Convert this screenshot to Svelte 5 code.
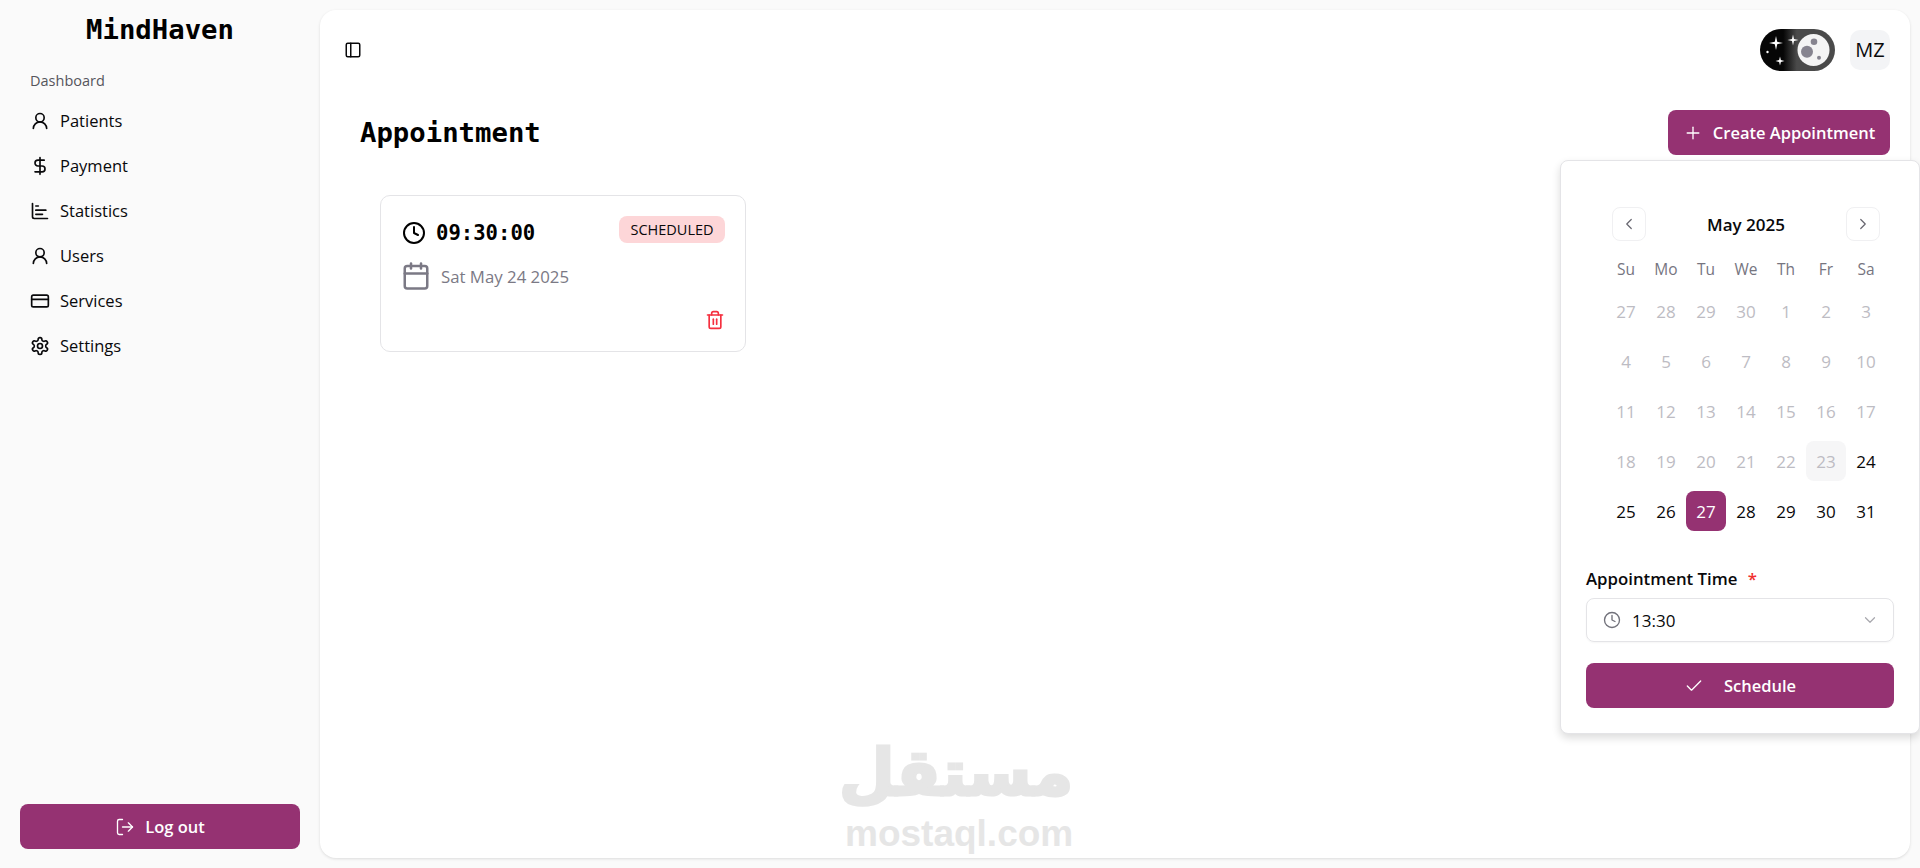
<script>
  const P = {
    user: '<circle cx="12" cy="8" r="5"/><path d="M20 21a8 8 0 0 0-16 0"/>',
    dollar: '<line x1="12" x2="12" y1="2" y2="22"/><path d="M17 5H9.5a3.5 3.5 0 0 0 0 7h5a3.5 3.5 0 0 1 0 7H6"/>',
    chart: '<path d="M3 3v16a2 2 0 0 0 2 2h16"/><path d="M7 16h8"/><path d="M7 11h12"/><path d="M7 6h3"/>',
    card: '<rect width="20" height="14" x="2" y="5" rx="2"/><line x1="2" x2="22" y1="10" y2="10"/>',
    gear: '<path d="M12.22 2h-.44a2 2 0 0 0-2 2v.18a2 2 0 0 1-1 1.73l-.43.25a2 2 0 0 1-2 0l-.15-.08a2 2 0 0 0-2.73.73l-.22.38a2 2 0 0 0 .73 2.73l.15.1a2 2 0 0 1 1 1.72v.51a2 2 0 0 1-1 1.74l-.15.09a2 2 0 0 0-.73 2.73l.22.38a2 2 0 0 0 2.73.73l.15-.08a2 2 0 0 1 2 0l.43.25a2 2 0 0 1 1 1.73V20a2 2 0 0 0 2 2h.44a2 2 0 0 0 2-2v-.18a2 2 0 0 1 1-1.73l.43-.25a2 2 0 0 1 2 0l.15.08a2 2 0 0 0 2.73-.73l.22-.39a2 2 0 0 0-.73-2.73l-.15-.08a2 2 0 0 1-1-1.74v-.5a2 2 0 0 1 1-1.74l.15-.09a2 2 0 0 0 .73-2.73l-.22-.38a2 2 0 0 0-2.73-.73l-.15.08a2 2 0 0 1-2 0l-.43-.25a2 2 0 0 1-1-1.73V4a2 2 0 0 0-2-2z"/><circle cx="12" cy="12" r="3"/>',
    logout: '<path d="M9 21H5a2 2 0 0 1-2-2V5a2 2 0 0 1 2-2h4"/><polyline points="16 17 21 12 16 7"/><line x1="21" x2="9" y1="12" y2="12"/>',
    panel: '<rect width="18" height="18" x="3" y="3" rx="2"/><path d="M9 3v18"/>',
    clock: '<circle cx="12" cy="12" r="10"/><polyline points="12 6 12 12 16 14"/>',
    cal: '<path d="M8 2v4"/><path d="M16 2v4"/><rect width="18" height="18" x="3" y="4" rx="2"/><path d="M3 10h18"/>',
    trash: '<path d="M3 6h18"/><path d="M19 6v14c0 1-1 2-2 2H7c-1 0-2-1-2-2V6"/><path d="M8 6V4c0-1 1-2 2-2h4c1 0 2 1 2 2v2"/><line x1="10" x2="10" y1="11" y2="17"/><line x1="14" x2="14" y1="11" y2="17"/>',
    left: '<path d="m15 18-6-6 6-6"/>',
    right: '<path d="m9 18 6-6-6-6"/>',
    down: '<path d="m6 9 6 6 6-6"/>',
    plus: '<path d="M5 12h14"/><path d="M12 5v14"/>',
    check: '<path d="M20 6 9 17l-5-5"/>'
  };
  const nav = [['user','Patients'],['dollar','Payment'],['chart','Statistics'],['user','Users'],['card','Services'],['gear','Settings']];
  const wk = ['Su','Mo','Tu','We','Th','Fr','Sa'];
  const days = [27,28,29,30,1,2,3,4,5,6,7,8,9,10,11,12,13,14,15,16,17,18,19,20,21,22,23,24,25,26,27,28,29,30,31];
</script>

{#snippet icon(name, size, sw = 2)}
  <svg class="ic" width={size} height={size} viewBox="0 0 24 24" fill="none" stroke="currentColor" stroke-width={sw} stroke-linecap="round" stroke-linejoin="round">{@html P[name]}</svg>
{/snippet}

<div class="app">
  <aside>
    <div class="brand">MindHaven</div>
    <div class="group">Dashboard</div>
    <nav>
      {#each nav as [i, label]}
        <div class="item">{@render icon(i, 20)}<span>{label}</span></div>
      {/each}
    </nav>
    <button class="btn logout">{@render icon('logout', 20, 1.6)}<span>Log out</span></button>
  </aside>

  <main>
    <header>
      <span class="trigger">{@render icon('panel', 18)}</span>
      <div class="right">
        <svg class="toggle" width="75" height="42" viewBox="0 0 75 42">
          <defs>
            <linearGradient id="tg" x1="0" x2="1" y1="0" y2="0">
              <stop offset="0.31" stop-color="#060606"/>
              <stop offset="0.49" stop-color="#4a4a4a"/>
            </linearGradient>
          </defs>
          <rect width="75" height="42" rx="21" fill="url(#tg)"/>
          <circle cx="53.500" cy="21" r="16" fill="#f4f4f4"/>
          <circle cx="47" cy="22.700" r="6" fill="#86848f"/>
          <circle cx="54" cy="12.700" r="3.300" fill="#86848f"/>
          <circle cx="59" cy="28.700" r="2" fill="#86848f"/>
          <g fill="#fff">
            <path d="M16 7l1.200 5.800L23 14l-5.800 1.200L16 21l-1.200-5.800L9 14l5.800-1.200z"/>
            <path d="M33 5.500l1 4.500 4.500 1-4.500 1-1 4.500-1-4.500-4.500-1 4.500-1z"/>
            <path d="M20 27.500l.9 3.600 3.600.9-3.600.9-.9 3.600-.9-3.600-3.600-.9 3.600-.9z"/>
            <circle cx="7.500" cy="23" r="1.200"/>
          </g>
        </svg>
        <div class="avatar">MZ</div>
      </div>
    </header>

    <div class="titlebar">
      <h1>Appointment</h1>
      <button class="btn create">{@render icon('plus', 20, 1.6)}<span>Create Appointment</span></button>
    </div>

    <section class="card">
      <div class="row1">
        <div class="time">{@render icon('clock', 24)}<span>09:30:00</span></div>
        <span class="badge">SCHEDULED</span>
      </div>
      <div class="date">{@render icon('cal', 30, 2)}<span>Sat May 24 2025</span></div>
      <div class="del">{@render icon('trash', 20)}</div>
    </section>

    <div class="wm">
      <div class="wm-ar" dir="rtl" lang="ar">مستقل</div>
      <div class="wm-en">mostaql.com</div>
    </div>

    <div class="pop">
      <div class="cal">
        <div class="calhead">
          <span class="navb">{@render icon('left', 18, 1.6)}</span>
          <strong>May 2025</strong>
          <span class="navb">{@render icon('right', 18, 1.6)}</span>
        </div>
        <div class="grid">
          {#each wk as w}<div class="wk">{w}</div>{/each}
          {#each days as d, i}
            <div class="day" class:off={i < 27} class:today={i === 26} class:sel={i === 30}>{d}</div>
          {/each}
        </div>
      </div>
      <div class="lab">Appointment Time <i>*</i></div>
      <div class="select">
        <span class="cl">{@render icon('clock', 18, 1.8)}</span>
        <span class="val">13:30</span>
        <span class="ch">{@render icon('down', 18, 1.6)}</span>
      </div>
      <button class="btn sched">{@render icon('check', 20, 1.6)}<span>Schedule</span></button>
    </div>
  </main>
</div>

<style>
  :global(body) { margin: 0; background: #fafafa; }
  * { box-sizing: border-box; }
  .app { display: flex; height: 868px; width: 1920px; overflow: hidden; background: #fafafa; color: #09090b; font-family: "Open Sans", "Noto Sans", sans-serif; font-size: 16px; }
  .ic { display: block; flex: none; }
  aside { width: 320px; flex: none; display: flex; flex-direction: column; padding: 0 20px 19px; }
  .brand { font: 700 27.300px/60px "DejaVu Sans Mono", monospace; text-align: center; color: #000; }
  .group { margin: 10px 0 0 10px; font-size: 14.500px; line-height: 22px; font-weight: 500; color: #55555c; }
  nav { display: flex; flex-direction: column; margin-top: 6px; flex: 1; }
  .item { height: 45px; display: flex; align-items: center; gap: 10px; padding-left: 10px; font-size: 16.500px; }
  .btn { display: flex; align-items: center; justify-content: center; border: 0; background: #953272; color: #fff; border-radius: 8px; height: 45px; font: 600 16.500px "Open Sans", sans-serif; }
  .logout { gap: 10px; width: 280px; }
  main { position: relative; flex: 1; margin: 10px 10px 10px 0; background: #fff; border-radius: 16px; box-shadow: 0 1px 3px rgba(0,0,0,.12); padding: 0 20px 0 40px; }
  header { height: 80px; display: flex; align-items: center; justify-content: space-between; padding-bottom: 1px; }
  .trigger { margin-left: -16px; }
  .right { display: flex; align-items: center; gap: 15px; }
  .toggle { display: block; }
  .avatar { width: 40px; height: 40px; border-radius: 10px; background: #f3f4f6; display: flex; align-items: center; justify-content: center; font-size: 20px; }
  .titlebar { display: flex; justify-content: space-between; align-items: center; margin-top: 20px; height: 45px; }
  h1 { margin: 0; font: 700 27.300px "DejaVu Sans Mono", monospace; color: #000; }
  .create { width: 222px; gap: 10px; }
  .card { width: 366px; height: 157px; margin: 40px 0 0 20px; border: 1.500px solid #e4e4e7; border-radius: 10px; padding: 20px 20px 0 21px; position: relative; }
  .row1 { display: flex; justify-content: space-between; align-items: flex-start; }
  .time { display: flex; align-items: center; gap: 10px; font: 700 20.600px "DejaVu Sans Mono", monospace; margin-top: 5px; color: #000; }
  .badge { height: 27px; width: 106px; border-radius: 8px; background: #fdd6d8; display: flex; align-items: center; justify-content: center; font-size: 14.500px; font-weight: 500; }
  .date { display: flex; align-items: center; gap: 10px; margin-top: 16px; margin-left: -1px; color: #7b7985; font-size: 16.800px; }
  .del { color: #f5303f; display: flex; justify-content: flex-end; margin-top: 19px; }
  .wm { position: absolute; left: 0; top: 0; margin: 731px 0 0 527px; width: 226px; color: #e6e6e6; text-align: center; }
  .wm-ar { font: 700 64px/64px "DejaVu Sans", sans-serif; height: 73px; padding-left: 6px; -webkit-text-stroke: 3px #e6e6e6; }
  .wm-en { font: 700 37px/40px "Liberation Sans", sans-serif; margin-left: -2px; }
  .pop { position: absolute; top: 150px; right: -10px; width: 360px; height: 574px; background: #fff; border: 1.500px solid #e4e4e7; border-radius: 8px; box-shadow: 0 4px 8px rgba(0,0,0,.14); padding: 46px 25px 0; }
  .cal { padding-left: 20px; width: 300px; }
  .calhead { display: flex; align-items: center; justify-content: space-between; padding: 0 6px; height: 34px; }
  .calhead strong { font-size: 17px; font-weight: 600; }
  .navb { width: 34px; height: 34px; border: 1px solid #f0f0f2; border-radius: 8px; display: flex; align-items: center; justify-content: center; color: #66656f; }
  .grid { display: grid; grid-template-columns: repeat(7, 40px); row-gap: 10px; }
  .wk { height: 40px; margin: 8px 0 -8px; display: flex; align-items: center; justify-content: center; font-size: 15.500px; color: #76757f; }
  .day { height: 40px; display: flex; align-items: center; justify-content: center; font-size: 17px; border-radius: 8px; }
  .off { color: #bdbcc3; }
  .today { background: #f6f6f7; }
  .sel { background: #953272; color: #fff; }
  .lab { margin-top: 38px; font-size: 16.800px; font-weight: 600; line-height: 20px; color: #09090b; }
  .lab i { font-style: normal; color: #f0302f; margin-left: 6px; }
  .select { margin-top: 9px; height: 44px; width: 308px; border: 1.500px solid #e4e4e7; border-radius: 8px; display: flex; align-items: center; padding: 0 14px 0 16px; box-shadow: 0 1px 2px rgba(0,0,0,.04); }
  .cl { color: #71717a; }
  .val { margin-left: 11px; flex: 1; font-size: 17px; }
  .ch { color: #a8a8ae; }
  .sched { margin-top: 21px; width: 308px; gap: 20px; }
</style>
